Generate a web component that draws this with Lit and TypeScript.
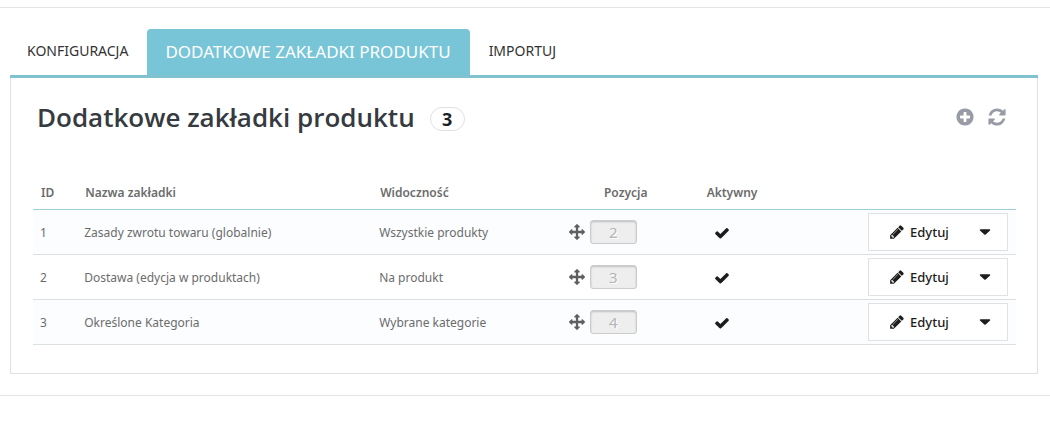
import { LitElement, html, css, svg } from "lit";
import { customElement, property, state } from "lit/decorators.js";

const ICONS: Record<string, string> = {
  pencil:
    "M491 1536l91-91-235-235-91 91v107h128v128h107zm523-928q0-22-22-22-10 0-17 7l-542 542q-7 7-7 17 0 22 22 22 10 0 17-7l542-542q7-7 7-17zm-54-192l416 416-832 832h-416v-416zm683 96q0 53-37 90l-166 166-416-416 166-165q36-38 90-38 53 0 91 38l235 234q37 39 37 91z",
  plus:
    "M1344 960v-128q0-26-19-45t-45-19h-256v-256q0-26-19-45t-45-19h-128q-26 0-45 19t-19 45v256h-256q-26 0-45 19t-19 45v128q0 26 19 45t45 19h256v256q0 26 19 45t45 19h128q26 0 45-19t19-45v-256h256q26 0 45-19t19-45zm320-64q0 209-103 385.5t-279.5 279.5-385.5 103-385.5-103-279.5-279.5-103-385.5 103-385.5 279.5-279.5 385.5-103 385.5 103 279.5 279.5 103 385.5z",
  refresh:
    "M1639 1056q0 5-1 7-64 268-268 434.5t-478 166.5q-146 0-282.5-55t-243.5-157l-129 129q-19 19-45 19t-45-19-19-45v-448q0-26 19-45t45-19h448q26 0 45 19t19 45-19 45l-137 137q71 66 161 102t187 36q134 0 250-65t186-179q11-17 53-117 8-23 30-23h192q13 0 22.5 9.5t9.5 22.5zm25-800v448q0 26-19 45t-45 19h-448q-26 0-45-19t-19-45 19-45l138-138q-148-137-349-137-134 0-250 65t-186 179q-11 17-53 117-8 23-30 23h-199q-13 0-22.5-9.5t-9.5-22.5v-7q65-268 270-434.5t480-166.5q146 0 284 55.5t245 156.5l130-129q19-19 45-19t45 19 19 45z",
  check:
    "M1671 566q0 40-28 68l-724 724-136 136q-28 28-68 28t-68-28l-136-136-362-362q-28-28-28-68t28-68l136-136q28-28 68-28t68 28l294 295 656-657q28-28 68-28t68 28l136 136q28 28 28 68z",
  move:
    "M1792 896q0 26-19 45l-256 256q-19 19-45 19t-45-19-19-45v-128h-384v384h128q26 0 45 19t19 45-19 45l-256 256q-19 19-45 19t-45-19l-256-256q-19-19-19-45t19-45 45-19h128v-384h-384v128q0 26-19 45t-45 19-45-19l-256-256q-19-19-19-45t19-45l256-256q19-19 45-19t45 19 19 45v128h384v-384h-128q-26 0-45-19t-19-45 19-45l256-256q19-19 45-19t45 19l256 256q19 19 19 45t-19 45-45 19h-128v384h384v-128q0-26 19-45t45-19 45 19l256 256q19 19 19 45z",
  caret: "M384 600h1024q50 0 70 40t-20 90l-480 450q-82 70-164 0l-480-450q-40-50-20-90t90-40z",
};

@customElement("ui-icon")
export class UiIcon extends LitElement {
  @property() name = "";

  static styles = css`
    :host {
      display: inline-flex;
      width: 16px;
      height: 16px;
    }
    svg {
      width: 100%;
      height: 100%;
      fill: currentColor;
    }
  `;

  render() {
    return html`<svg viewBox="0 0 1792 1792" aria-hidden="true">
      ${svg`<path d=${ICONS[this.name] ?? ""}></path>`}
    </svg>`;
  }
}

interface ProductTab {
  id: number;
  name: string;
  visibility: string;
  position: number;
}

@customElement("app-root")
export class AppRoot extends LitElement {
  @state() private rows: ProductTab[] = [
    { id: 1, name: "Zasady zwrotu towaru (globalnie)", visibility: "Wszystkie produkty", position: 2 },
    { id: 2, name: "Dostawa (edycja w produktach)", visibility: "Na produkt", position: 3 },
    { id: 3, name: "Określone Kategoria", visibility: "Wybrane kategorie", position: 4 },
  ];

  static styles = css`
    :host {
      display: block;
      padding-top: 7px;
      background: #fff;
      color: #6c6c6c;
      font: 12px/16px "Noto Sans", "Open Sans", sans-serif;
    }
    .module {
      border: solid #e4e4e4;
      border-width: 1px 0;
      padding: 21px 12px 21px 10px;
    }
    a {
      color: inherit;
      text-decoration: none;
    }
    .tabs {
      display: flex;
      border-bottom: 3px solid #80c2cf;
    }
    .tab {
      padding: 12px 19px 14px 17px;
      font-size: 14px;
      line-height: 20px;
      color: #333;
    }
    .tab.active {
      padding: 13px 19px 13px 18px;
      border-radius: 4px 4px 0 0;
      background: #78c5d8;
      color: #fff;
      font-size: 17px;
    }
    .tab.active + .tab {
      padding-left: 19px;
    }
    .panel {
      border: 1px solid #dfe0e2;
      border-top: 0;
      padding: 21px 21px 28px 22px;
    }
    .heading {
      display: flex;
      align-items: center;
      padding: 0 9px 0 4px;
      margin-bottom: 40px;
    }
    h2 {
      margin: 0;
      color: #363a41;
      font-family: "Open Sans", "Noto Sans", sans-serif;
      font-size: 26px;
      font-weight: 600;
      line-height: 36px;
    }
    .count {
      box-sizing: border-box;
      min-width: 35px;
      margin: 4px auto 0 15px;
      border: 1px solid #dfe0e2;
      border-radius: 12px;
      color: #1b1f29;
      font-size: 18px;
      font-weight: 700;
      line-height: 22px;
      text-align: center;
    }
    .tool {
      display: flex;
      margin-left: 12px;
      color: #989ba5;
    }
    .tool ui-icon {
      width: 20px;
      height: 20px;
    }
    table {
      width: 100%;
      border-collapse: separate;
      border-spacing: 0;
      table-layout: fixed;
    }
    .c-id { width: 4.5%; }
    .c-name { width: 30%; }
    .c-vis { width: 19.3%; }
    .c-pos { width: 13%; }
    .c-act { width: 13%; }
    th {
      height: 33px;
      padding: 1px 8px 0;
      border-bottom: 1px solid #9dcfda;
      font-weight: 600;
      text-align: left;
    }
    th.pos {
      text-align: center;
    }
    th.act {
      padding-left: 17px;
    }
    td {
      height: 42px;
      padding: 2px 8px 0 7px;
      border-bottom: 1px solid #dcdfe3;
    }
    tr.odd td {
      background: #fbfdff;
    }
    td.act {
      padding-left: 24px;
      color: #1d1d1b;
    }
    td.act ui-icon {
      display: flex;
    }
    td.wide {
      height: 44px;
      padding: 0 8px 0 7px;
    }
    .order {
      display: flex;
      align-items: center;
      gap: 5px;
      color: #5f5f5f;
    }
    .order .chip {
      box-sizing: border-box;
      width: 47px;
      border: 1px solid #ccc;
      border-radius: 3px;
      background: #eee;
      box-shadow: inset 0 1px 2px rgba(0, 0, 0, 0.2);
      color: #b5b5b5;
      text-shadow: 1px 1px 0 #fff;
      font-size: 15px;
      line-height: 22px;
      text-align: center;
    }
    .actions {
      display: flex;
      width: 140px;
      box-sizing: border-box;
      margin-left: auto;
      border: 1px solid #dfe1e4;
      background: #fff;
    }
    button {
      display: flex;
      align-items: center;
      justify-content: center;
      height: 36px;
      margin: 0;
      padding: 0;
      border: 0;
      background: none;
      color: #1d1d1b;
      font: 500 13px/20px "Noto Sans", "Open Sans", sans-serif;
      cursor: pointer;
    }
    .edit {
      padding-left: 20px;
      gap: 5px;
    }
    .more {
      flex: 1;
      padding-left: 15px;
    }
  `;

  render() {
    return html`
      <main class="module">
        <nav class="tabs">
          <a class="tab" href="#config">KONFIGURACJA</a>
          <a class="tab active" href="#tabs" aria-current="page">DODATKOWE ZAKŁADKI PRODUKTU</a>
          <a class="tab" href="#import">IMPORTUJ</a>
        </nav>
        <section class="panel">
          <header class="heading">
            <h2>Dodatkowe zakładki produktu</h2>
            <span class="count">${this.rows.length}</span>
            <a class="tool" href="#add" aria-label="Dodaj"><ui-icon name="plus"></ui-icon></a>
            <a class="tool" href="#refresh" aria-label="Odśwież"><ui-icon name="refresh"></ui-icon></a>
          </header>
          <table>
            <colgroup>
              <col class="c-id" />
              <col class="c-name" />
              <col class="c-vis" />
              <col class="c-pos" />
              <col class="c-act" />
              <col />
            </colgroup>
            <thead>
              <tr>
                <th>ID</th>
                <th>Nazwa zakładki</th>
                <th>Widoczność</th>
                <th class="pos">Pozycja</th>
                <th class="act">Aktywny</th>
                <th></th>
              </tr>
            </thead>
            <tbody>
              ${this.rows.map(
                (row, i) => html`
                  <tr class=${i % 2 ? "even" : "odd"}>
                    <td>${row.id}</td>
                    <td>${row.name}</td>
                    <td>${row.visibility}</td>
                    <td class="wide">
                      <div class="order">
                        <ui-icon name="move"></ui-icon>
                        <span class="chip">${row.position}</span>
                      </div>
                    </td>
                    <td class="act"><ui-icon name="check"></ui-icon></td>
                    <td class="wide">
                      <div class="actions">
                        <button class="edit" type="button"><ui-icon name="pencil"></ui-icon>Edytuj</button>
                        <button class="more" type="button" aria-label="Więcej"><ui-icon name="caret"></ui-icon></button>
                      </div>
                    </td>
                  </tr>
                `
              )}
            </tbody>
          </table>
        </section>
      </main>
    `;
  }
}
